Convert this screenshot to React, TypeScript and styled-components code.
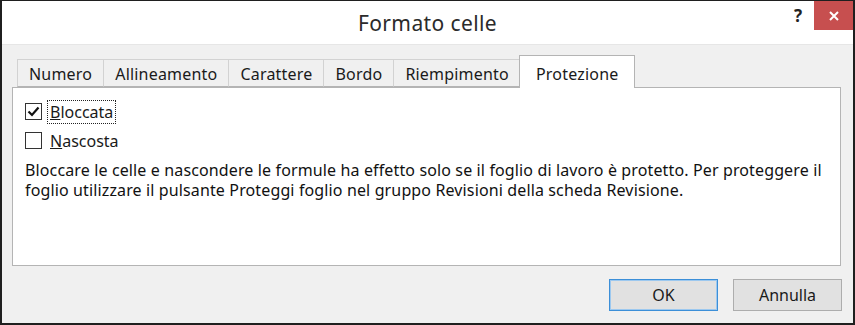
import React from 'react';
import styled, { createGlobalStyle } from 'styled-components';

const GlobalStyle = createGlobalStyle`
  html, body {
    margin: 0;
    padding: 0;
    background: #ffffff;
  }
  * {
    box-sizing: border-box;
  }
`;

const Window = styled.div`
  width: 855px;
  height: 325px;
  display: flex;
  flex-direction: column;
  border: 2px solid #1f1f1f;
  border-top-width: 1px;
  background: #f0f0f0;
  font-family: "Noto Sans", "Open Sans", sans-serif;
  color: #1a1a1a;
  overflow: hidden;
`;

const TitleBar = styled.div`
  height: 44px;
  flex: none;
  display: grid;
  grid-template-columns: 1fr auto 1fr;
  align-items: start;
  background: #ffffff;
  border-bottom: 1px solid #e6e6e6;
`;

const Title = styled.h1`
  grid-column: 2;
  margin: 0;
  padding-top: 8px;
  font-size: 21px;
  font-weight: 400;
  color: #2b2b2b;
  letter-spacing: 0.4px;
`;

const Controls = styled.div`
  grid-column: 3;
  justify-self: end;
  display: flex;
  align-items: start;
`;

const HelpButton = styled.div`
  width: 32px;
  height: 29px;
  display: flex;
  align-items: center;
  justify-content: center;
  font-size: 17px;
  font-weight: 700;
  color: #222;
`;

const CloseButton = styled.div`
  width: 39px;
  height: 29px;
  display: flex;
  align-items: center;
  justify-content: center;
  background: #c74f4f;
  color: #ffffff;
`;

const Body = styled.div`
  flex: 1;
  display: flex;
  flex-direction: column;
  padding: 10px 12px 12px 10px;
`;

const TabStrip = styled.div`
  display: flex;
  align-items: flex-end;
  height: 32px;
  padding-left: 5px;
  position: relative;
  z-index: 1;
`;

const Tab = styled.div<{ $active?: boolean }>`
  height: ${(p) => (p.$active ? '33px' : '28px')};
  padding: ${(p) => (p.$active ? '3px 16px 0' : '1px 11px 0')};
  margin: ${(p) => (p.$active ? '0 -2px' : '0')};
  display: flex;
  align-items: center;
  font-size: 16px;
  letter-spacing: 0.2px;
  color: #1a1a1a;
  background: ${(p) => (p.$active ? '#ffffff' : '#f0f0f0')};
  border: 1px solid ${(p) => (p.$active ? '#b4b4b4' : '#d2d2d2')};
  border-bottom: ${(p) => (p.$active ? 'none' : '1px solid #b4b4b4')};
  border-left-width: ${(p) => (p.$active ? '1px' : '0')};
  position: relative;
  z-index: ${(p) => (p.$active ? 2 : 1)};
  margin-bottom: ${(p) => (p.$active ? '-1px' : '0')};

  &:first-child {
    border-left-width: 1px;
  }
`;

const Panel = styled.div`
  flex: 1;
  background: #ffffff;
  border: 1px solid #b4b4b4;
  padding: 9px 14px 0 12px;
  display: flex;
  flex-direction: column;
`;

const CheckRow = styled.label`
  display: flex;
  align-items: center;
  gap: 5px;
  height: 29px;
  font-size: 16px;
`;

const Box = styled.span`
  width: 17px;
  height: 17px;
  flex: none;
  border: 1px solid #333333;
  background: #ffffff;
  display: flex;
  align-items: center;
  justify-content: center;
`;

const LabelText = styled.span<{ $focused?: boolean }>`
  padding: 0 2px;
  border: 1px dotted ${(p) => (p.$focused ? '#222' : 'transparent')};
`;

const Key = styled.span`
  text-decoration: underline;
`;

const Note = styled.p`
  margin: 5px 0 0;
  font-size: 16px;
  line-height: 20px;
  letter-spacing: 0.13px;
  color: #111;
`;

const Footer = styled.div`
  display: flex;
  justify-content: flex-end;
  gap: 15px;
  padding-top: 13px;
  margin-right: -1px;
`;

const Button = styled.button<{ $default?: boolean }>`
  width: 109px;
  height: 32px;
  font-family: inherit;
  font-size: 16px;
  color: #1a1a1a;
  background: #e1e1e1;
  border: 1px solid ${(p) => (p.$default ? '#3c8fd8' : '#adadad')};
  box-shadow: ${(p) => (p.$default ? 'inset 0 0 0 1px #9cc8ef' : 'none')};
  padding: 0;
`;

const Check = () => (
  <svg width="13" height="11" viewBox="0 0 13 11">
    <path d="M1.5 5.5 L5 9 L11.5 1.5" fill="none" stroke="#111" strokeWidth="2.2" />
  </svg>
);

const Cross = () => (
  <svg width="12" height="12" viewBox="0 0 12 12">
    <path d="M2 2 L10 10 M10 2 L2 10" stroke="#fff" strokeWidth="2" />
  </svg>
);

const tabs = ['Numero', 'Allineamento', 'Carattere', 'Bordo', 'Riempimento', 'Protezione'];

export default function App() {
  return (
    <>
      <GlobalStyle />
      <Window>
        <TitleBar>
          <Title>Formato celle</Title>
          <Controls>
            <HelpButton>?</HelpButton>
            <CloseButton>
              <Cross />
            </CloseButton>
          </Controls>
        </TitleBar>
        <Body>
          <TabStrip>
            {tabs.map((t) => (
              <Tab key={t} $active={t === 'Protezione'}>
                {t}
              </Tab>
            ))}
          </TabStrip>
          <Panel>
            <CheckRow>
              <Box>
                <Check />
              </Box>
              <LabelText $focused>
                <Key>B</Key>loccata
              </LabelText>
            </CheckRow>
            <CheckRow>
              <Box />
              <LabelText>
                <Key>N</Key>ascosta
              </LabelText>
            </CheckRow>
            <Note>
              Bloccare le celle e nascondere le formule ha effetto solo se il foglio di lavoro è protetto. Per proteggere il
              foglio utilizzare il pulsante Proteggi foglio nel gruppo Revisioni della scheda Revisione.
            </Note>
          </Panel>
          <Footer>
            <Button $default>OK</Button>
            <Button>Annulla</Button>
          </Footer>
        </Body>
      </Window>
    </>
  );
}
